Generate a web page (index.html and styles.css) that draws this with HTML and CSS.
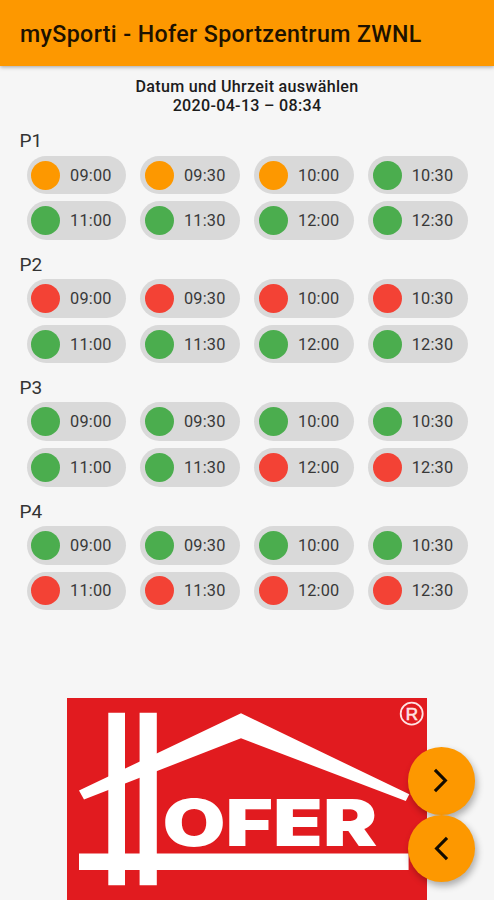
FILE: index.html
```html
<!DOCTYPE html>
<html lang="de">
<head>
  <meta charset="UTF-8">
  <meta name="viewport" content="width=device-width, initial-scale=1.0">
  <title>mySporti - Hofer Sportzentrum ZWNL</title>
  <link rel="stylesheet" href="styles.css">
</head>
<body>
  <header class="app-bar"><h1>mySporti - Hofer Sportzentrum ZWNL</h1></header>
  <main>
    <div class="date-time">
      <div class="hint">Datum und Uhrzeit auswählen</div>
      <div class="value">2020-04-13 – 08:34</div>
    </div>
    <section>
      <h2>P1</h2>
      <div class="slots">
        <button class="chip orange">09:00</button>
        <button class="chip orange">09:30</button>
        <button class="chip orange">10:00</button>
        <button class="chip green">10:30</button>
        <button class="chip green">11:00</button>
        <button class="chip green">11:30</button>
        <button class="chip green">12:00</button>
        <button class="chip green">12:30</button>
      </div>
    </section>
    <section>
      <h2>P2</h2>
      <div class="slots">
        <button class="chip red">09:00</button>
        <button class="chip red">09:30</button>
        <button class="chip red">10:00</button>
        <button class="chip red">10:30</button>
        <button class="chip green">11:00</button>
        <button class="chip green">11:30</button>
        <button class="chip green">12:00</button>
        <button class="chip green">12:30</button>
      </div>
    </section>
    <section>
      <h2>P3</h2>
      <div class="slots">
        <button class="chip green">09:00</button>
        <button class="chip green">09:30</button>
        <button class="chip green">10:00</button>
        <button class="chip green">10:30</button>
        <button class="chip green">11:00</button>
        <button class="chip green">11:30</button>
        <button class="chip red">12:00</button>
        <button class="chip red">12:30</button>
      </div>
    </section>
    <section>
      <h2>P4</h2>
      <div class="slots">
        <button class="chip green">09:00</button>
        <button class="chip green">09:30</button>
        <button class="chip green">10:00</button>
        <button class="chip green">10:30</button>
        <button class="chip red">11:00</button>
        <button class="chip red">11:30</button>
        <button class="chip red">12:00</button>
        <button class="chip red">12:30</button>
      </div>
    </section>
  </main>
  <footer>
    <svg class="logo" viewBox="67 698 360 202">
      <path d="M108.3 712.7H125V885.3H108.3zM139.6 712.7H156.8V885.3H139.6zM79 853.5H408.6V870H79z"/>
      <path d="M79 790.5L241 713.3L409.3 794.3L405.8 801L241 738.3L84 799.5z"/>
      <text class="logo-text" transform="translate(162.5 846) scale(1.18 1)" textLength="182" lengthAdjust="spacingAndGlyphs">OFER</text>
      <circle cx="411.7" cy="713.7" r="11"/>
      <text class="logo-mark" x="411.9" y="719.8" text-anchor="middle">R</text>
    </svg>
  </footer>
  <div class="fabs">
    <button class="fab" aria-label="Weiter"><svg viewBox="0 0 24 24"><path d="M5.7 1.8L15.7 12L5.7 22.2"/></svg></button>
    <button class="fab" aria-label="Zurück"><svg viewBox="0 0 24 24"><path d="M17.3 1.8L7.3 12L17.3 22.2"/></svg></button>
  </div>
</body>
</html>
```
FILE: styles.css
```css
:root {
  --orange: #fd9800;
  --green: #4bad4e;
  --red: #f34235;
  --chip: #d9d9d9;
}
* { box-sizing: border-box; }
body {
  margin: 0;
  height: 900px;
  display: flex;
  flex-direction: column;
  overflow: hidden;
  background: #f6f6f6;
  color: #1c1c1c;
  font-family: Roboto, sans-serif;
}
button {
  border: none;
  font-family: inherit;
  cursor: pointer;
}
.app-bar {
  height: 66px;
  flex: none;
  display: flex;
  align-items: center;
  padding: 1px 20px 0;
  background: var(--orange);
  box-shadow: 0 1px 4px rgba(0,0,0,0.35);
}
.app-bar h1 {
  margin: 0;
  font-size: 23.2px;
  font-weight: 500;
  letter-spacing: 0.37px;
  color: #1d1200;
  white-space: nowrap;
}
main {
  flex: 1;
  padding-top: 11px;
}
.date-time {
  height: 51.4px;
  font-size: 16.1px;
  font-weight: 500;
  line-height: 19px;
  letter-spacing: 0.3px;
  text-align: center;
}
section { height: 123.4px; }
h2 {
  margin: 0;
  height: 27.3px;
  padding-left: 19.5px;
  font-size: 19px;
  font-weight: 400;
  line-height: 25px;
  color: #333;
}
.slots {
  display: grid;
  grid-template-columns: repeat(4, 99.5px);
  gap: 7px 14.4px;
  padding-left: 26.5px;
}
.chip {
  display: flex;
  align-items: center;
  gap: 10px;
  height: 38.7px;
  padding: 0 0 0 4.6px;
  border-radius: 20px;
  background: var(--chip);
  color: #383838;
  font-size: 16.3px;
  letter-spacing: 0.2px;
}
.chip::before {
  content: "";
  width: 29px;
  height: 29px;
  border-radius: 50%;
}
.chip.orange::before { background: var(--orange); }
.chip.green::before { background: var(--green); }
.chip.red::before { background: var(--red); }
footer {
  height: 202px;
  flex: none;
  padding-left: 67px;
}
.logo {
  display: block;
  width: 360px;
  height: 202px;
  background: #e11b1f;
  fill: #fff;
}
.logo circle {
  fill: none;
  stroke: #ffe3e3;
  stroke-width: 1.8;
}
.logo-text {
  font: 900 64.6px Inter, sans-serif;
}
.logo-mark {
  font: 400 17px "Liberation Sans", sans-serif;
  fill: #ffe3e3;
  stroke: #ffe3e3;
  stroke-width: 0.6;
}
.fabs {
  position: absolute;
  right: 19px;
  bottom: 18px;
  display: flex;
  flex-direction: column;
}
.fab {
  display: flex;
  align-items: center;
  justify-content: center;
  width: 67.4px;
  height: 67.4px;
  padding: 0;
  border-radius: 50%;
  background: var(--orange);
  box-shadow: 2px 4px 7px rgba(0,0,0,0.3);
}
.fab svg {
  width: 25px;
  height: 25px;
  fill: none;
  stroke: #120b00;
  stroke-width: 3;
}
```
